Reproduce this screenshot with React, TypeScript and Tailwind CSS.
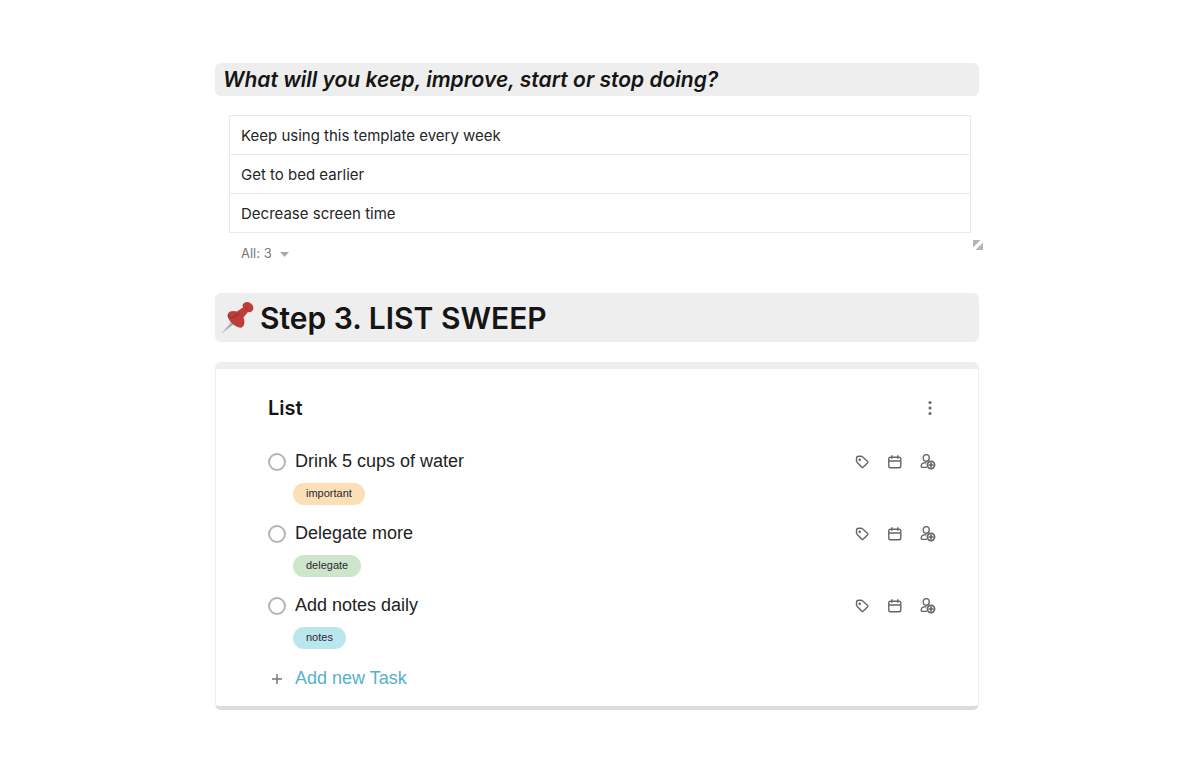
import { useState } from "react";

const habits = [
  "Keep using this template every week",
  "Get to bed earlier",
  "Decrease screen time",
];

const tasks = [
  { id: "water", title: "Drink 5 cups of water", tag: "important", color: "bg-[#fbdfb6]" },
  { id: "delegate", title: "Delegate more", tag: "delegate", color: "bg-[#cde5ca]" },
  { id: "notes", title: "Add notes daily", tag: "notes", color: "bg-[#bae6ee]" },
];

const TagIcon = () => (
  <svg className="size-4" viewBox="0 0 16 16" fill="none" stroke="currentColor" strokeWidth="1.4" strokeLinejoin="round">
    <path d="M2.500 6.700V4.500c0-1.300.9-2.200 2.200-2.200h2.200c.6 0 1.100.2 1.500.5l5 4.400c.6.500.6 1.100.1 1.700l-4.200 4.200c-.5.500-1.200.5-1.700 0L3.200 8.400c-.4-.5-.7-1-.7-1.700z" />
    <circle cx="5.700" cy="5.700" r=".6" fill="currentColor" />
  </svg>
);

const CalendarIcon = () => (
  <svg className="size-4" viewBox="0 0 16 16" fill="none" stroke="currentColor" strokeWidth="1.4">
    <rect x="1.800" y="3.200" width="12" height="10.600" rx="1.800" />
    <path d="M1.800 7h12M4.800 1.200v3.600M10.800 1.200v3.600" />
  </svg>
);

const AssignIcon = () => (
  <svg className="size-4" viewBox="0 0 16 16" fill="none" stroke="currentColor" strokeWidth="1.4">
    <ellipse cx="6.200" cy="3.900" rx="3" ry="3.300" />
    <path d="M7 13.400H2c-.5 0-.8-.3-.8-.8 0-2.300 1.500-3.700 3.600-3.700h1.800" />
    <circle cx="11" cy="11" r="3.600" strokeWidth="1.700" />
    <path d="M11 8.400v5.200M8.400 11h5.200" strokeWidth="1.700" />
  </svg>
);

const PushpinIcon = () => (
  <svg className="h-[34px] w-9 shrink-0" viewBox="0 0 36 34" fill="none">
    <path d="M2.500 32.500 14.500 18l3 2.800z" fill="#8c9ba0" />
    <path d="m3.500 31 11.800-12" stroke="#d9e3e6" strokeWidth="1" />
    <path
      d="M23.400 4.600C24.300 1.400 28 0 31.200 2c3.300 2 4.200 5.700 2 7.900-1.200 1.200-2.700 1.500-4.200 1.200l-4.600 5.400c1.700 3.600 1.300 8.200-1.300 9.800-2.900 1.400-7.200-1.100-10-4-3-3-5.700-7-4-9.800 1.600-2.600 5.400-3 8.800-1.900l6.400-4.400z"
      fill="#bd3e38"
    />
    <path d="M9.300 14.200c1.500 3.400 4.400 2.800 6.700 1 2-1.600 3.400-1.500 4.300-3.700" stroke="#762a29" strokeWidth="1.200" strokeDasharray="1.500 1.200" />
    <path d="M25.600 5c1 2.300 2.200 3.500 4.200 4.300" stroke="#a7322e" strokeWidth="1" />
  </svg>
);

const TaskRow = ({ task }) => {
  const [done, setDone] = useState(false);

  return (
    <li>
      <div className="flex h-[34px] items-center">
        <input
          id={task.id}
          type="checkbox"
          checked={done}
          onChange={() => setDone(!done)}
          className="mr-[9px] size-[18px] shrink-0 cursor-pointer appearance-none rounded-full border-2 border-[#b3b3b3] bg-white checked:bg-[#b3b3b3]"
        />
        <label htmlFor={task.id} className="grow pb-0.5 text-lg text-[#222]">
          {task.title}
        </label>
        <div className="flex gap-[17px] text-[#666]">
          <button type="button" aria-label="Add tag"><TagIcon /></button>
          <button type="button" aria-label="Set date"><CalendarIcon /></button>
          <button type="button" aria-label="Assign person"><AssignIcon /></button>
        </div>
      </div>
      <div className="mt-1 flex pl-[25px]">
        <span className={`h-[22px] rounded-full px-[13px] text-[11px] leading-5 text-[#2c2833] ${task.color}`}>
          {task.tag}
        </span>
      </div>
    </li>
  );
};

const App = () => {
  return (
    <div className="min-h-screen bg-white pt-[63px] pr-1.5 pb-16 font-['Inter',sans-serif] text-[#151515]">
      <main className="mx-auto max-w-[764px]">
        <h2 className="rounded-md bg-[#eee] px-2 text-[21px] leading-[33px] font-semibold italic">
          What will you keep, improve, start or stop doing?
        </h2>

        <section className="mt-[19px] mr-2 ml-3.5">
          <table className="w-full border-collapse text-[15px] leading-5 text-[#262626]">
            <tbody>
              {habits.map((habit) => (
                <tr key={habit} className="h-[39px]">
                  <td className="border border-[#e9e9e9] px-[11px] pt-0.5">{habit}</td>
                </tr>
              ))}
            </tbody>
          </table>
          <div className="relative flex h-10 items-center pl-3">
            <button type="button" className="flex items-center gap-2 pt-0.5 text-[13px] text-[#777]">
              All: 3
              <svg className="h-[5px] w-[9px]" viewBox="0 0 9 5" fill="#aaa">
                <path d="M0 0h9L4.500 5z" />
              </svg>
            </button>
            <button type="button" aria-label="Resize" className="absolute top-[7px] -right-3">
              <svg className="size-[10px]" viewBox="0 0 10 10" fill="#b5b5b5">
                <path d="M0 0h7.500L0 7.500zM10 2.500V10H2.500z" />
              </svg>
            </button>
          </div>
        </section>

        <h1 className="mt-5 flex h-[49px] items-center gap-[5px] rounded-md bg-[#eee] pl-1 text-[30px] font-semibold">
          <PushpinIcon />
          <span className="pt-0.5">Step 3. LIST SWEEP</span>
        </h1>

        <section className="mt-5 rounded-md border border-t-[7px] border-b-4 border-[#eee] border-b-[#dcdcdc] bg-white pt-6 pr-[42px] pb-3 pl-[52px] font-['Liberation_Sans',Arial,sans-serif]">
          <header className="flex h-[30px] items-center justify-between">
            <h3 className="font-['Inter',sans-serif] text-xl font-semibold">List</h3>
            <button type="button" aria-label="List options">
              <svg className="h-4 w-3" viewBox="0 0 12 16" fill="#666">
                <circle cx="6" cy="2.500" r="1.500" />
                <circle cx="6" cy="8" r="1.500" />
                <circle cx="6" cy="13.500" r="1.500" />
              </svg>
            </button>
          </header>
          <ul className="mt-[22px] flex flex-col gap-3">
            {tasks.map((task) => (
              <TaskRow key={task.id} task={task} />
            ))}
          </ul>
          <button type="button" className="mt-[13px] flex h-8 items-center gap-[9px] text-lg text-[#57b1cb]">
            <svg className="size-[18px]" viewBox="0 0 18 18" fill="none" stroke="#777" strokeWidth="1.500">
              <path d="M9 5v10M4 10h10" />
            </svg>
            Add new Task
          </button>
        </section>
      </main>
    </div>
  );
};

export default App;
